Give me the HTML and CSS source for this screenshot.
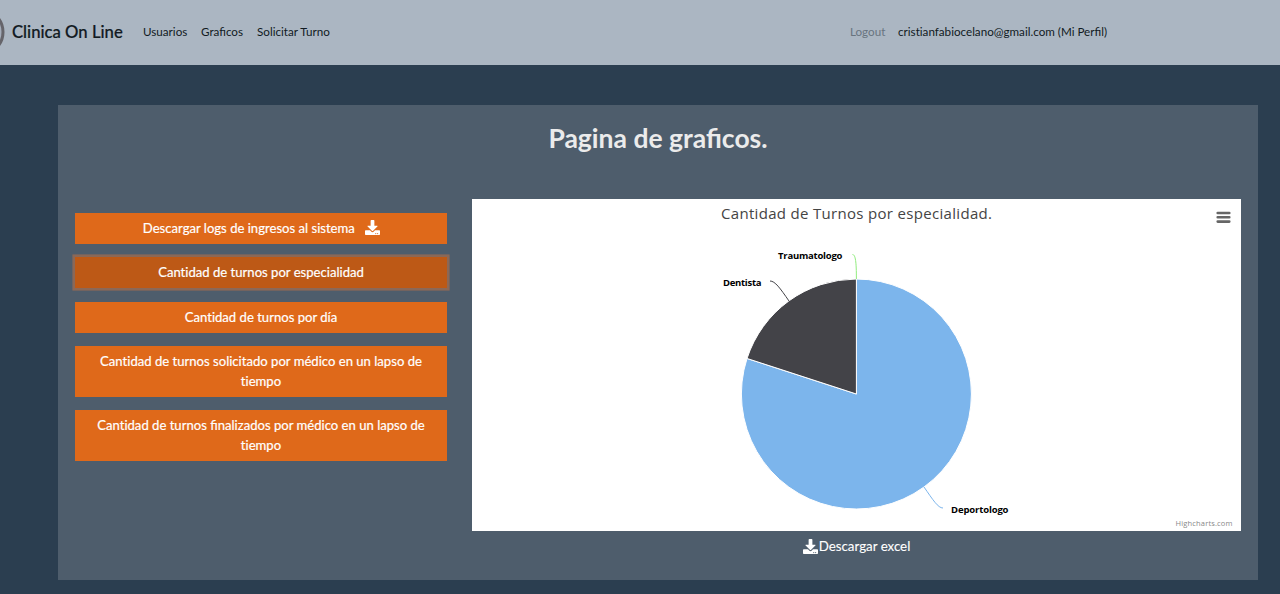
FILE: index.html
```html
<!DOCTYPE html>
<html lang="es">
<head>
<meta charset="utf-8">
<title>Clinica On Line</title>
<link rel="stylesheet" href="styles.css">
</head>
<body>
<svg class="defs" aria-hidden="true">
  <symbol id="download" viewBox="0 0 512 512">
    <path d="M216 0h80c13.300 0 24 10.700 24 24v168h87.700c17.800 0 26.700 21.500 14.100 34.100L269.700 378.300c-7.500 7.500-19.800 7.500-27.300 0L90.100 226.100c-12.600-12.600-3.700-34.100 14.100-34.100H192V24c0-13.300 10.700-24 24-24zm296 376v112c0 13.300-10.700 24-24 24H24c-13.300 0-24-10.700-24-24V376c0-13.300 10.700-24 24-24h146.700l49 49c20.100 20.100 52.500 20.100 72.600 0l49-49H488c13.300 0 24 10.700 24 24zm-124 88c0-11-9-20-20-20s-20 9-20 20 9 20 20 20 20-9 20-20zm64 0c0-11-9-20-20-20s-20 9-20 20 9 20 20 20 20-9 20-20z"/>
  </symbol>
</svg>
<nav class="navbar">
  <svg class="logo" viewBox="0 0 6 44"><ellipse cx="-14" cy="22" rx="17" ry="20" fill="#a4acb9" stroke="#65646a" stroke-width="3"/></svg>
  <a class="brand">Clinica On Line</a>
  <a class="link users">Usuarios</a>
  <a class="link charts">Graficos</a>
  <a class="link turns">Solicitar Turno</a>
  <div class="account">
    <a class="link logout">Logout</a>
    <a class="link profile">crist&zwnj;ianfabiocelano@gmail.com (Mi Perfil)</a>
  </div>
</nav>
<main class="panel">
  <h1 class="title">Pagina de graficos.</h1>
  <div class="content">
    <div class="actions">
      <button class="btn">Descargar logs de ingresos al sistema <svg class="icon spaced"><use href="#download"/></svg></button>
      <button class="btn active">Cant&zwnj;idad de turnos por especialidad</button>
      <button class="btn">Cant&zwnj;idad de turnos por día</button>
      <button class="btn">Cant&zwnj;idad de turnos solicitado por médico en un lapso de<br>t&zwnj;iempo</button>
      <button class="btn">Cant&zwnj;idad de turnos finalizados por médico en un lapso de<br>t&zwnj;iempo</button>
    </div>
    <div class="results">
      <svg class="chart" viewBox="472 199 769 332">
        <text class="chart-title" x="721" y="219" textLength="271">Cantidad de Turnos por especialidad.</text>
        <g stroke="#fff" stroke-linejoin="round">
          <path fill="#7cb5ec" d="M856.400 394V279A115 115 0 1 1 747.030 358.460Z"/>
          <path fill="#434348" d="M856.400 394L747.030 358.460A115 115 0 0 1 856.400 279Z"/>
        </g>
        <g fill="none">
          <path stroke="#90ed7d" d="M852.500 254.500C855.500 254.500 856.400 262 856.400 279"/>
          <path stroke="#434348" d="M770 281C775 281 780 288 789 301"/>
          <path stroke="#7cb5ec" d="M943 508C938 508 933 500 924 487"/>
        </g>
        <g class="labels">
          <text x="778" y="259" textLength="64.500">Traumatologo</text>
          <text x="723" y="285.500" textLength="38.500">Dentista</text>
          <text x="951" y="513" textLength="57.500">Deportologo</text>
        </g>
        <path stroke="#666" stroke-width="2.600" stroke-linecap="round" d="M1217.700 213H1229.300M1217.700 217.300H1229.300M1217.700 221.600H1229.300"/>
        <text class="credits" x="1175.500" y="526" textLength="57">Highcharts.com</text>
      </svg>
      <a class="excel"><svg class="icon"><use href="#download"/></svg><span>Descargar excel</span></a>
    </div>
  </div>
</main>
</body>
</html>
```
FILE: styles.css
```css
* { box-sizing: border-box; }
body { margin: 0; height: 594px; overflow: hidden; background: #2b3e50; color: #ebebeb; font-family: Lato, sans-serif; }
.defs { position: absolute; width: 0; height: 0; }
.navbar { display: flex; align-items: center; height: 65px; padding-bottom: 1px; background: #abb6c2; color: #111a22; white-space: nowrap; }
.logo { width: 6px; height: 44px; margin-right: 6px; }
.brand { width: 131px; font-size: 16.700px; font-weight: 500; -webkit-text-stroke: .2px #111a22; }
.link { padding-bottom: 1px; font-size: 11.650px; }
.users { width: 58px; }
.charts { width: 56px; }
.account { display: flex; margin-left: auto; width: 430px; }
.logout { width: 48px; color: #68747f; }
.panel { width: 1200px; height: 474.500px; margin: 40px 0 0 58px; padding: 17px 17px 0; background: #4e5d6c; }
.title { margin: 0; height: 77px; font-size: 26.500px; line-height: 33px; text-align: center; }
.content { display: flex; gap: 25px; }
.actions { width: 372px; padding-top: 14px; display: flex; flex-direction: column; gap: 13.400px; }
.btn { border: 0; padding: 6px 0 5.500px; background: #df691a; color: #fff; font: 13.100px/19.500px Lato, sans-serif; text-align: center; white-space: nowrap; -webkit-text-stroke: .2px #fff; }
.active { background: #bd5916; box-shadow: 0 0 0 2.600px #8b6857; }
.icon { width: 15px; height: 15px; fill: #fff; stroke: none; vertical-align: -2px; }
.spaced { margin: 0 -1px 0 7px; }
.results { width: 769px; text-align: center; }
.chart { display: block; width: 769px; height: 332px; background: #fff; }
.chart-title { font: 15px "Open Sans", sans-serif; fill: #444; }
.labels { font: bold 9.500px "Open Sans", sans-serif; fill: #000; }
.credits { font: 7.500px "Open Sans", sans-serif; fill: #888; }
.excel { display: flex; justify-content: center; align-items: center; gap: 1px; height: 30px; font-size: 13.300px; color: #fff; -webkit-text-stroke: .1px #fff; }
```
